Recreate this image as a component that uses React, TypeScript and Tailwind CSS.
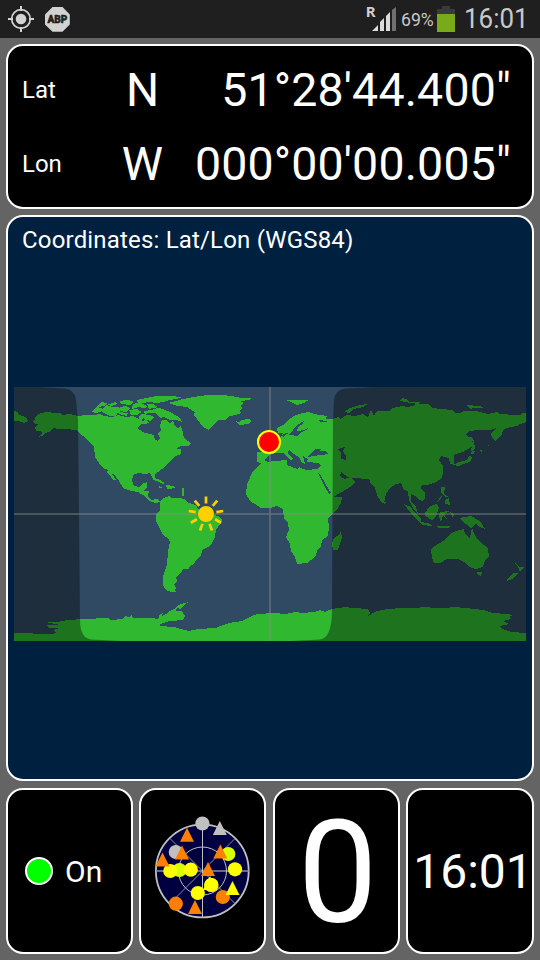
import React from "react";

const LAND: string[] = [
  // North and Central America
  "M33 421L36 419 34 418 37 415 41 413 47 412 54 413 60 413 62 415 70 414 78 416 86 415 93 415 100 414 104 416 112 417 118 415 126 417 133 416 139 419 143 421 146 419 149 423 145 424 141 424 137 428 140 430 145 433 150 434 154 435 155 440 158 441 160 438 158 434 161 430 160 425 162 420 166 420 170 423 173 421 175 426 178 428 181 426 183 433 184 438 188 441 191 443 188 446 181 446 176 449 181 449 181 454 175 456 172 460 168 463 165 467 158 472 155 474 156 481 153 479 150 473 145 474 139 473 134 474 132 480 134 486 139 487 142 484 147 482 147 487 144 491 149 491 148 496 151 500 157 499 160 502 155 503 148 500 143 495 138 492 131 491 123 488 119 481 113 473 112 474 116 480 113 480 110 475 107 473 108 470 103 468 99 463 95 457 94 446 91 444 86 438 80 434 76 430 66 429 58 429 54 428 49 432 45 433 42 436 38 437 42 433 40 431 36 431 35 427 39 424 35 424Z",
  "M14 411L18 412 18 414 27 418 28 421 24 423 18 421 14 421Z",
  // South America
  "M160 501L164 498 169 496 171 498 179 498 184 499 189 503 196 505 199 510 208 513 218 516 222 519 221 523 216 530 215 537 212 543 210 546 206 548 202 550 201 556 197 559 194 564 190 566 189 569 183 569 181 573 176 577 177 581 174 584 176 588 174 590 177 592 171 592 166 590 163 585 163 577 165 571 167 565 168 551 170 542 169 539 163 535 160 529 156 521 156 514 160 510Z",
  // Greenland and the Canadian archipelago
  "M168 403L176 401 183 399 194 397 207 395 222 395 232 396 241 398 252 398 249 400 240 401 244 403 241 405 242 409 239 411 241 413 236 415 230 416 225 420 218 420 213 425 211 427 209 430 203 427 200 423 197 419 194 415 195 412 190 409 187 407 178 406 174 405Z",
  "M136 401L140 399 147 398 156 396 170 396 182 397 177 399 169 400 164 402 155 403 150 402 141 403Z",
  "M144 411L151 410 158 408 163 409 170 412 177 416 181 419 182 422 176 420 170 420 164 417 160 418 156 413 148 413 145 414Z",
  "M92 412L96 407 102 408 102 411 96 413ZM102 409L106 405 112 407 119 407 121 411 115 413 108 415 102 412Z",
  "M96 407L101 402 107 403 105 406ZM107 405L115 402 117 404 112 406ZM119 402L124 400 129 400 134 402 130 405 122 404ZM120 407L126 406 130 408 126 412 120 411ZM133 404L139 402 145 405 148 407 143 408 138 407 132 409ZM129 410L137 409 142 412 137 415 131 415ZM142 414L150 415 154 417 150 421 143 418 140 422 139 416ZM147 404L153 404 158 407 149 409ZM108 414L118 412 116 416 109 416ZM118 412L128 413 127 416 119 414Z",
  // Iceland, Svalbard, British Isles and Caribbean
  "M235 421L239 422 241 420 249 419 251 421 248 424 239 425Z",
  "M285 400L297 400 309 400 304 403 297 405 291 402Z",
  "M266 431L270 430 272 437 275 441 266 445 268 439ZM257 438L262 436 263 441 257 444Z",
  "M151 479L158 479 165 483 163 484 157 481ZM166 485L173 486 176 488 167 489ZM159 486L163 488 159 488ZM182 488h2v8h-2z",
  // Europe, Asia and Africa
  "M277 428L285 424 288 420 294 416 299 414 308 412 314 414 320 415 327 416 326 419 332 419 338 417 340 419 347 415 355 416 363 414 368 417 371 410 374 416 377 411 389 411 393 408 402 406 407 407 413 406 415 404 428 404 432 408 452 410 455 413 460 413 464 411 476 411 488 414 497 412 499 414 516 415 520 415 523 413 526 413 526 422 520 424 517 426 507 428 503 430 502 435 495 441 492 438 491 434 494 430 497 428 490 430 478 430 469 431 466 434 468 437 472 437 473 446 468 449 463 452 456 454 454 455 454 464 450 464 449 458 444 457 441 456 439 460 443 466 443 474 441 479 436 482 427 485 422 485 421 488 425 493 425 498 422 501 418 499 415 496 411 494 411 501 416 507 418 514 413 508 409 500 408 491 404 490 401 483 396 484 390 488 386 494 384 503 382 503 378 497 374 486 371 484 369 479 364 479 357 478 350 478 345 475 341 472 340 476 345 479 350 477 355 482 350 487 342 492 333 497 342 497 341 503 336 511 332 514 328 519 329 527 328 536 322 540 321 546 317 551 316 556 311 560 307 563 297 564 295 557 291 551 290 544 286 537 289 530 288 523 284 518 283 509 277 506 270 508 261 508 255 504 250 501 246 494 247 484 253 471 258 467 261 463 257 462 257 452 270 453 271 449 267 447 276 440 281 437 283 433 278 433Z",
  // Novaya Zemlya, Russian Arctic, Japan and Sakhalin
  "M344 412L350 408 360 405 368 404 363 407 353 409 350 413ZM400 401L402 398 408 400 409 402 420 402 419 404 410 403ZM466 405L480 406 484 408 473 408 470 409ZM472 437L474 441 475 448 472 453 471 449 473 445Z",
  "M471 452L475 451 474 454 471 454ZM470 455L472 458 470 462 463 464 459 466 452 465 462 461 467 460ZM479 450L482 450 482 452ZM489 444L492 441 487 448Z",
  // South-east Asia
  "M404 504L411 507 414 512 421 519 422 525 416 519 407 508ZM421 522L431 524 432 526 422 525ZM425 513L430 506 437 504 439 508 436 517 432 520 425 516ZM440 512L450 511 444 514 447 519 443 516 441 522 439 517ZM437 526L450 526 449 528 438 528ZM450 512L454 514 453 518ZM454 515L459 518 471 516 480 521 485 529 480 527 476 524 471 528 466 524 459 518Z",
  "M441 487L445 487 444 494 449 497 446 497 441 493ZM437 502L442 495 441 499ZM445 500L449 498 450 505 445 504ZM382 501L386 502 385 505Z",
  // Madagascar, Australia and New Zealand
  "M341 531L342 538 338 550 333 550 332 543 334 538 339 535Z",
  "M432 548L443 541 446 538 452 533 456 531 464 529 465 534 470 538 472 528 475 535 478 540 484 545 488 549 489 556 485 561 483 567 476 569 469 567 464 562 458 559 447 559 440 563 434 563 432 557 431 551Z",
  "M477 572L482 572 481 576 478 575ZM515 563L519 567 524 567 520 572 518 567ZM507 579L514 573 518 573 512 579 507 581Z",
  // Antarctica
  "M14 633L52 634 56 633 53 630 60 628 49 628 47 625 60 625 46 622 57 622 68 620 83 619 108 618 111 620 123 619 125 616 129 617 132 615 133 618 151 618 158 619 160 614 163 613 162 616 166 614 168 612 174 609 177 606 184 603 189 602 184 605 181 609 177 608 176 611 182 611 185 616 183 620 170 621 160 624 160 626 174 627 181 629 189 631 198 629 216 628 220 626 229 623 242 621 250 617 257 614 275 613 285 614 295 612 302 613 314 612 320 610 325 612 332 609 345 607 353 608 368 609 370 613 368 616 377 611 388 609 401 608 415 608 424 607 435 608 444 608 455 607 465 608 483 610 493 613 507 614 513 615 509 617 511 619 503 621 509 624 500 626 502 629 511 632 526 633 526 641 14 641Z",
];

const WATER: string[] = [
  // Baltic and White Sea
  "M282 435L286 433 289 434 293 430 297 425 304 421 303 424 298 427 297 431 304 430 308 428 308 429 300 433 297 436 291 435 287 434 283 437ZM319 420L327 421 326 422 320 422Z",
  // Mediterranean and Adriatic
  "M264 460L268 456 275 453 284 453 288 458 291 460 293 459 288 453 289 450 294 454 299 457 302 463 305 464 304 459 303 456 308 459 307 462 318 463 321 465 318 469 306 470 299 467 297 469 287 465 287 460 274 461 268 462Z",
  // Black, Caspian and Red Seas
  "M311 453L315 449 321 449 320 451 325 451 329 454 320 455 314 456 308 457ZM338 449L345 447 343 451 346 456 346 460 341 459 341 453ZM318 473L321 476 325 483 328 488 331 493 329 494 324 485Z",
];

function StatusIcons() {
  return (
    <svg width="76" height="38" viewBox="0 0 76 38">
      <g fill="none" stroke="#d2d2d2">
        <circle cx="21" cy="19" r="9.3" strokeWidth="1.7" />
        <path d="M21 6v5M21 27v5M8 19h5M29 19h5" strokeWidth="2" />
      </g>
      <circle cx="21" cy="19" r="5.3" fill="#d2d2d2" />
      <path d="M52.5 7h10l7.3 7.5v10l-7.3 7.3h-10L45 24.5v-10z" fill="#d2d2d2" />
      <text x="57.4" y="23.1" textAnchor="middle" textLength="20" lengthAdjust="spacingAndGlyphs" className="fill-[#1f1f1f] stroke-[#1f1f1f] stroke-[0.5px] font-[Roboto,sans-serif] text-[11.5px] font-black">ABP</text>
    </svg>
  );
}

function Signal() {
  return (
    <svg width="34" height="38" viewBox="366 0 34 38">
      <text x="365.7" y="17" className="fill-[#d0d0d0] font-['Noto_Sans',sans-serif] text-[15px] font-bold">R</text>
      <path d="M372 31l6-6v6zM380 31v-9l4-4v13zM386 31V16l4-4v19z" fill="#dcdcdc" />
      <path d="M392 31V10l4-3v24z" fill="#707070" />
    </svg>
  );
}

function WorldMap() {
  return (
    <svg className="mt-[132px] block" width="512" height="254" viewBox="14 387 512 254">
      <path d="M14 387h512v254H14z" fill="#304a63" />
      <g shapeRendering="crispEdges">
        {LAND.map((d) => <path key={d} d={d} fill="#30b830" />)}
        {WATER.map((d) => <path key={d} d={d} fill="#304a63" />)}
      </g>
      <path d="M14 387H38L65 388.5Q75 390 76 400L78 420 79 510 80 620Q80 638 91 639.5L121 641H14ZM374 387L345 388.5Q335 390 334 400L333 418 332.5 515 332 610Q332 638 320 639.5L291 641H526V387Z" fill="#000" fillOpacity=".375" />
      <path d="M14 514H526M270 387V641" stroke="#8c8c8c" strokeOpacity=".55" strokeWidth="1.6" />
      <g stroke="#ffcf00" strokeWidth="2.7">
        {[0, 40, 80, 120, 160, 200, 240, 280, 320].map((a) => (
          <path key={a} d="M206 503.5v-7" transform={`rotate(${a} 206 514)`} />
        ))}
      </g>
      <circle cx="206" cy="514" r="8" fill="#ffcf00" />
      <circle cx="269" cy="442" r="11" fill="#f00" stroke="#ff0" strokeWidth="2" />
    </svg>
  );
}

const DOTS: [number, number, string][] = [
  [202.4, 823.5, "#c0c0c0"], [175.8, 852, "#c0c0c0"], [228.3, 854, "#d8ff00"],
  [179.5, 870, "#d8ff00"], [170.3, 871, "#ff0"], [190.8, 869.7, "#ff0"],
  [235, 869.3, "#ff0"], [211.3, 885, "#ff0"], [197.8, 893, "#ff0"],
  [222.8, 897, "#ff8000"], [175.8, 903.7, "#ff8000"],
];
const TRIANGLES: [number, number, string][] = [
  [219.8, 821, "#c0c0c0"], [187, 827.7, "#ff8000"], [182, 845.5, "#ff8000"],
  [162.5, 852.5, "#ff8000"], [220.3, 844.5, "#ff8000"], [210, 876, "#ff0"],
  [208, 862, "#ff8000"], [232.5, 881, "#ff0"], [195, 900, "#ff8000"],
];

function SkyPlot() {
  return (
    <svg className="mr-[2px] mb-[8px]" width="98" height="104" viewBox="153 815 98 104">
      <circle cx="202.3" cy="871" r="46.4" fill="#000040" stroke="#c0c0c0" strokeWidth="1.8" />
      <g fill="none" stroke="#8c8ca2">
        <path d="M156 871h93" strokeWidth="1.6" />
        <path d="M170 838.5l65 65M235 838.5l-65 65" />
        <circle cx="202.5" cy="871" r="24" stroke="#c0c0c0" />
        <path d="M202.5 825v92" stroke="#c0c0c0" />
      </g>
      {DOTS.map(([x, y, c]) => <circle key={`${x}-${y}`} cx={x} cy={y} r="7.1" fill={c} />)}
      {TRIANGLES.map(([x, y, c]) => <path key={`${x}-${y}`} d={`M${x} ${y}l7 14h-14z`} fill={c} />)}
      <circle cx="211.3" cy="885" r="7.1" fill="#ff0" />
    </svg>
  );
}

function Coordinate({ label, side, value }: { label: string; side: string; value: string }) {
  return (
    <div className="flex h-[74px] items-center">
      <span className="w-[84px] text-[24px]">{label}</span>
      <span className="w-[73px] text-center text-[46.5px]">{side}</span>
      <span className="flex-1 text-right text-[46.5px] tracking-[0.15px]">{value}</span>
    </div>
  );
}

const card = "rounded-[17px] border-2 border-white bg-black";

export default function App() {
  return (
    <div className="flex h-[960px] w-[540px] flex-col overflow-hidden bg-[#646464] font-[Roboto,sans-serif] leading-none whitespace-nowrap text-white">
      <header className="flex h-[38px] shrink-0 items-center bg-[#1f1f1f] text-[#c8c8c8]">
        <StatusIcons />
        <div className="ml-auto flex items-center">
          <Signal />
          <span className="ml-[1px] w-[36px] pt-[1px] text-[18px]"><span className="inline-block origin-left scale-x-[.98]">69%</span></span>
          <svg width="18" height="26" viewBox="0 0 18 26">
            <path d="M5 0h8v3h5v5H0V3h5z" fill="#3a3a3a" />
            <path d="M0 8h18v18H0z" fill="#78aa19" />
          </svg>
          <span className="ml-[9px] w-[76px] text-[27px]"><span className="inline-block origin-left scale-x-[.96]">16:01</span></span>
        </div>
      </header>
      <main className="flex flex-1 flex-col gap-[6px] px-[6px] pt-[6px] pb-[6px]">
        <section className={`${card} h-[165px] pt-[7px] pr-[21px] pl-[14px]`}>
          <Coordinate label="Lat" side="N" value={"51°28'44.400\""} />
          <Coordinate label="Lon" side="W" value={"000°00'00.005\""} />
        </section>
        <section className="h-[566px] rounded-[17px] border-2 border-white bg-[#00203f] px-[6px] pt-[8px]">
          <h1 className="ml-[8px] h-[30px] text-[24px] leading-[30px] tracking-[0.18px]">Coordinates: Lat/Lon (WGS84)</h1>
          <WorldMap />
        </section>
        <section className="mt-[1px] grid h-[166px] grid-cols-[127px_127px_127px_128px] justify-between">
          <div className={`${card} flex items-center pl-[17px]`}>
            <span className="h-[28px] w-[28px] rounded-full border-2 border-white bg-[#0f0]" />
            <span className="ml-[12px] pt-[1px] text-[30px]">On</span>
          </div>
          <div className={`${card} flex items-center justify-center`}><SkyPlot /></div>
          <div className={`${card} flex items-center justify-center pt-[6px] pl-[3px] text-[142px]`}>0</div>
          <div className={`${card} flex items-center justify-center pt-[1px] pl-[6px] text-[48px]`}>16:01</div>
        </section>
      </main>
    </div>
  );
}
